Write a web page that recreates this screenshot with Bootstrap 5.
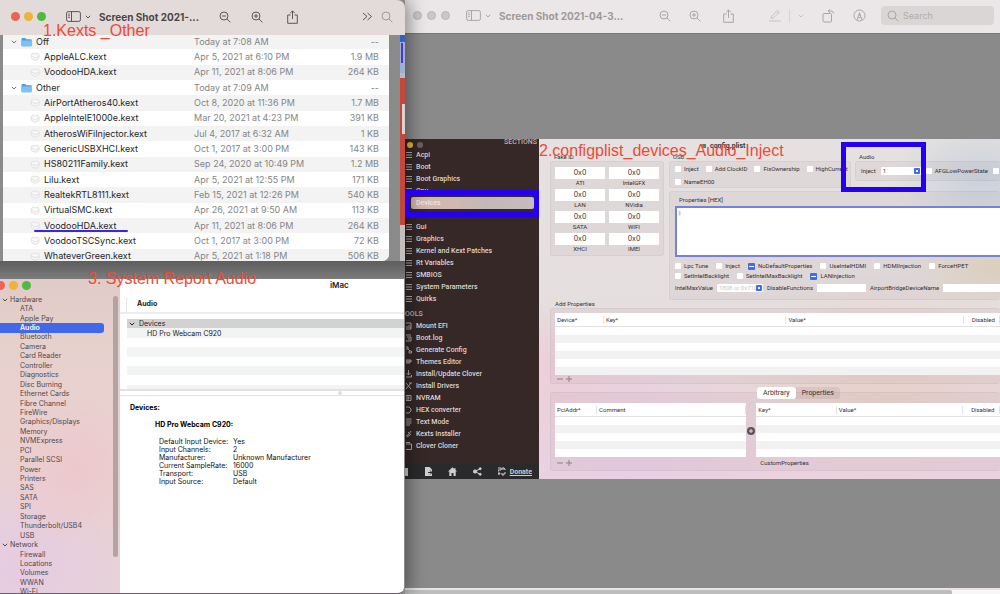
<!DOCTYPE html>
<html lang="en">
<head>
<meta charset="utf-8">
<meta name="viewport" content="width=device-width, initial-scale=1">
<title>Audio kext walkthrough</title>
<link href="https://cdn.jsdelivr.net/npm/bootstrap@5.3.0/dist/css/bootstrap.min.css" rel="stylesheet">
<style>
:root{--ui:Inter,"Liberation Sans",sans-serif;--rule:#e2e2e2}
body{font:400 7px/10px var(--ui);color:#222;background:#8a8a8a}
button,input,select,textarea{font:inherit;color:inherit;border:0;padding:0;background:none}
svg{display:block;fill:none;stroke:currentColor}
h1,h2,h3,fieldset,legend,table,dl,ul,label{margin:0;padding:0;font:inherit}
a{color:inherit;text-decoration:none}
.desktop{min-height:100vh;max-height:100vh}
.left-side{width:40.5%;z-index:2;background:#8a8a8a;box-shadow:4px 0 16px rgba(0,0,0,.4)}
.note{position:absolute;z-index:5;font:16px/18px "Liberation Sans",Arial,sans-serif;color:#ee4a33;white-space:nowrap;pointer-events:none}
.light{width:9px;height:9px;border-radius:50%;display:block}
.red{background:#ed6356}.amber{background:#eeb33a}.green{background:#4dbb3f}.off{background:#cbc7c7;border:1px solid #b9b5b5}

/* front viewer window */
.front-bar{height:35px;background:#e3dbda;border-top-right-radius:8px;color:#5c5757;padding:0 12px 2px 11px}
.front-bar h1,.back-bar h1{font-weight:700;font-size:10px;line-height:14px;white-space:nowrap}
.front-bar h1{color:#4b4645}
.finder-area{height:226px;padding-left:3px;background:#8b8b8b;border-bottom-right-radius:6px}
.finder{height:226px;overflow:hidden;background:#fff;border-bottom-right-radius:7px}
.finder table{width:100%;height:230px;margin-top:-1px;font-size:9px;line-height:12px;border-collapse:collapse;table-layout:fixed}
.finder tr:nth-child(odd){background:#f3f3f3}
.finder td{padding:0;white-space:nowrap;color:#858585}
.finder td:first-child{color:#262626}
.finder td:last-child{text-align:right;padding-right:10px}
.c-name{width:49.5%}.c-size{width:20%}
.file{padding-left:27px}.folder{padding-left:8px}
.file svg{color:#e0e0e0;fill:#f9f9f9}
.marked{position:relative}
.marked::after{content:"";position:absolute;left:-10px;right:-12px;bottom:0;height:2px;background:#3c24f0;border-radius:1px}
.gutter{width:11px;flex:none}
.photo-edge{width:5px;flex:none;background:linear-gradient(#2f62c4 0 7px,#9fb0d6 7px 38px,#b9b9c4 38px 43px,#c5473c 43px 190px,#c4bfbf 190px)}
.photo-edge::before{content:"";display:block;width:2px;height:20px;margin:8px 0 0 1px;background:#4636d6}
.photo-edge::after{content:"";display:block;width:3px;height:30px;margin:41px 0 0 2px;background:#d9d2d1}
.gap-shade{height:18px;background:linear-gradient(#5e5e5e,#7c7c7c)}

/* system report window */
.report{background:#fff;border-bottom-right-radius:6px;overflow:hidden;min-height:0;margin-right:1px;border-bottom:1px solid #6d5a6c}
.report-side{width:120px;flex:none;background:radial-gradient(circle at 75px 190px,#ecc8cc 0,transparent 80px),radial-gradient(circle at 20px 290px,#e6cbe2 0,transparent 110px),linear-gradient(#e0cbc8,#e6d0cc 60px,#ead2d1 55%,#e6d3d8);color:#514849}
.report-side ul{list-style:none;height:302px;width:104px}
.report-side li{flex:1;padding-left:20px;display:flex;align-items:center;white-space:nowrap;min-height:0}
.report-side li.group{padding-left:2px;gap:2px}
.report-side li.active{background:#4168ea;color:#fff;font-weight:600;border-radius:0 3px 3px 0}
.report-head{height:16px;padding-top:2px}
.scroll-track{width:5px;height:261px;background:#b3a3a2;border-radius:3px;margin:1px 2px 0 9px}
.imac{font-weight:600;font-size:8px;margin-left:210px;line-height:13px}
.bar-head{height:14px;margin:6px 0 0 6px;padding-left:10px;font-weight:700;border-left:1px solid var(--rule);line-height:12px}
.tree-top{height:2px;background:#ededed;margin-bottom:5px}
.tree{margin-left:7px;border-collapse:collapse;width:calc(100% - 7px);height:70px}
.tree td{height:9px;line-height:9px;padding:0 0 0 20px}
.tree tr:nth-child(even) td{background:#f2f3f3}
.tree tr:first-child td{background:#d2d2d2;padding-left:2px}
.tree tr:last-child td{height:4px;line-height:1px}
.splitter{height:7px;border:solid var(--rule);border-width:2px 0 1px}
.splitter::after{content:"";display:block;width:4px;height:4px;border-radius:50%;background:#ddd;margin-left:218px}
.facts{grid-template-columns:74px 1fr;margin:8px 0 0 39px;line-height:8px;color:#111}
.facts dt,.facts dd{font-weight:400;margin:0}

/* back viewer window */
.back-bar{height:34px;background:#ebe6e7;border-bottom:1px solid #777;color:#aaa5a6;padding:0 6px 2px 8px}
.back-bar h1{color:#9e999a;width:126px}
.back-lights{gap:5px}
.back-tools{padding:0 15px 0 34px}
.canvas-area{background:#8a8a8a;padding-top:105px;min-height:0}
.search{width:113px;height:19px;background:#dad6d6;border-radius:4px;padding:0 6px;color:#aaa6a6}
.search input{width:80px;font-size:9px;outline:0}
.search input::placeholder{color:#b0acac;opacity:1}
.h-scroll{height:6px;background:#f8f6f7;border-top:2px solid #e9e3e6}
.h-scroll div{height:4px;width:92%;background:#bdbdbd;border-radius:0 2px 0 0}

/* Clover configurator */
.clover{height:340px}
.clover-side{width:134px;flex:none;background:#352827;color:#dcd6d5;font-family:Roboto,"Liberation Sans",sans-serif;font-weight:500}
.clover-side .top{height:10px;padding:0 2px 0 2px;line-height:7px;color:#b9b0af}
.clover-side .light{width:6px;height:6px;margin-top:3px}
.clover-side ul{list-style:none}
.clover-side li{height:12px;line-height:12px;display:flex;align-items:center;gap:4px;padding-left:1px;white-space:nowrap}
.clover-side li svg{flex:none;width:6px;height:8px;color:#b3abaa}
.clover-side .chosen{background:linear-gradient(90deg,#cfb5ac,#d0b9b2 35%,#c3b8b9 60%,#c6bcbe);color:#efe7e5;margin:0 5px 0 6px;padding-left:5px;border-radius:2px;position:relative}
.chosen::after{content:"";position:absolute;inset:-7px -5px -8px -6px;border:5px solid #2500f0;z-index:3}
.tools-title{height:15px;padding-top:4px;color:#b9b0af}
.clover-foot{height:15px;background:#2a2a2c;color:#d0cdcd;padding:0 7px 0 0}
.clover-main{font:400 6px/8px Roboto,"Liberation Sans",sans-serif;color:#353132;padding:0 0 9px 11px;min-width:0;background:
 radial-gradient(ellipse at 96% 12%,#c9d2dc 0,transparent 90px),
 radial-gradient(ellipse at 100% 38%,#e2d6c2 0,transparent 90px),
 radial-gradient(ellipse at 3% 68%,#ecced9 0,transparent 130px),
 radial-gradient(ellipse at 75% 70%,#e6d2c9 0,transparent 150px),
 radial-gradient(ellipse at 20% 100%,#e8cfe4 0,transparent 150px),
 linear-gradient(#e6e1e1 0,#e5dfdf 45%,#e8d6da 75%,#ead2de)}
.plist-title{height:14px;line-height:12px;font-weight:700;font-size:7px;color:#3a3637;padding-left:152px}
.plist-title span{width:4px;height:4px;background:#4a8a5c}
.panel{background:rgba(120,90,95,.06);border:1px solid rgba(120,100,105,.08);border-radius:3px}
.fake{width:114px;flex:none}
.fake .panel{padding:5px 4px 1px;grid-template-columns:1fr 1fr;column-gap:4px;height:95px}
.fake label{text-align:center;line-height:8px;height:22px}
.fake input{display:block;width:100%;height:12px;background:#fff;text-align:center;font:400 7px/12px var(--ui)}
.right-part{margin-left:5px;min-width:0}
.tick{display:flex;align-items:center;gap:3px;white-space:nowrap;flex:none}
.tick input{appearance:none;width:6px;height:6px;background:#fff;border-radius:1px;margin:0;flex:none}
.tick input.mixed{width:7px;height:7px;background:#3b6ef0 linear-gradient(#fff,#fff) center/5px 1px no-repeat}
.usb{width:182px;flex:none}
.usb .panel{height:27px;padding:0 0 0 5px;overflow:hidden}
.line{display:flex;gap:7px;height:13px;align-items:center}
.audio{min-width:0}
.audio .panel{height:20px;padding:2px 0 0 5px;border-right:0}
.audio .line{gap:5px}
.audio .frame{position:absolute;left:-14px;top:-11px;width:85px;height:50px;border:5px solid #2500f0}
.drop{position:relative;background:#fff;border-radius:1px;display:flex;flex:none}
.drop select,.drop input{appearance:none;width:100%;padding-left:2px;height:8px;line-height:8px}
.drop::after{content:"";position:absolute;right:1px;top:1px;width:6px;height:6px;background:#3b6ef0 linear-gradient(#fff,#fff) center/2px 2px no-repeat;border-radius:1px;pointer-events:none}
.inj-box{width:40px}.max-box{width:46px}
.props{margin-top:3px;padding:4px 0 0 5px;height:109px;border-right:0}
.props textarea{display:block;width:100%;height:51px;background:#fff;border:2px solid #7482dd;border-right:0;resize:none;outline:0;overflow:hidden;margin:2px 0 4px;padding:1px 2px}
.props .tick-row{display:flex;height:10px;align-items:center;gap:8px}
.props .plain{background:#fff;height:8px}
.value-row{padding-top:3px}
.dis-box{width:49px}.bridge-box{width:20px}
.ghost::placeholder{color:#c9c9c9;opacity:1}
.grid-table{width:100%;border-collapse:separate;border-spacing:0;table-layout:fixed;background:#fff}
.grid-table th{font-weight:400;height:14px;padding:0 0 0 2px;border-bottom:1px solid var(--rule);background:linear-gradient(var(--rule),var(--rule)) right center/1px 8px no-repeat}
.grid-table td{height:8px;padding:0;line-height:1px}
.grid-table tr:nth-child(even) td{background:#f2f2f2}
.add-panel{padding:4px 0 0 4px;height:76px;border-right:0}
.arb-panel{margin-top:8px;padding:10px 0 0 4px;height:79px;border-right:0}
.below{margin-top:2px}
.pm button{width:9px;height:8px;display:flex;align-items:center;justify-content:center;color:#8b8084}
.tabs{position:absolute;left:206px;top:-6px;height:12px;background:rgba(130,90,95,.12);border-radius:3px}
.tabs button{height:12px;padding:0 6px;border-radius:3px;font-size:7px;line-height:12px}
.tabs .on{background:#fff}
</style>
</head>
<body>
<svg width="0" height="0" class="position-absolute" aria-hidden="true">
 <symbol id="i-side" viewBox="0 0 15 11"><rect x=".6" y=".6" width="13.8" height="9.8" rx="1.6"/><path d="M5.5.6v9.8M2.2 3h1.6M2.2 4.8h1.6M2.2 6.6h1.6"/></symbol>
 <symbol id="i-chev" viewBox="0 0 6 4"><path d="M.8.8 3 3 5.200.8"/></symbol>
 <symbol id="i-minus" viewBox="0 0 12 12"><circle cx="5" cy="5" r="4"/><path d="m8 8 3.400 3.400M3 5h4"/></symbol>
 <symbol id="i-plus" viewBox="0 0 12 12"><circle cx="5" cy="5" r="4"/><path d="m8 8 3.400 3.400M3 5h4M5 3v4"/></symbol>
 <symbol id="i-find" viewBox="0 0 12 12"><circle cx="5" cy="5" r="4"/><path d="m8 8 3.400 3.400"/></symbol>
 <symbol id="i-share" viewBox="0 0 11 14"><path d="M3.500 5H.7v8.300h9.600V5H7.500M5.500 9V1M3.200 3.200 5.500.9l2.300 2.300"/></symbol>
 <symbol id="i-kext" viewBox="0 0 10 9"><path d="M1 2.500 4 1l1.500 1L7 1l2 1.500v4L5.500 8.300 1.500 6.500zM2 4l3.300 2L9 4"/></symbol>
 <symbol id="i-dir" viewBox="0 0 11 10"><path d="M.5 2q0-1 1-1h2.800l1 1.200H10q.7 0 .7.800v5.500q0 .8-.8.8H1.300q-.8 0-.8-.8z" fill="#4a9fdc" stroke="none"/><path d="M.5 3.600h10.200v4.900q0 .8-.8.8H1.300q-.8 0-.8-.8z" fill="#7cc3f3" stroke="none"/></symbol>
 <symbol id="i-list" viewBox="0 0 6 8"><path d="M0 1.500h6M0 4h6M0 6.500h6"/></symbol>
</svg>
<div class="desktop d-flex position-relative overflow-hidden">

 <div class="left-side d-flex flex-column flex-shrink-0 position-relative">
  <section aria-label="Front viewer">
   <header class="front-bar d-flex align-items-center">
    <span class="light red"></span><span class="light amber mx-1"></span><span class="light green"></span>
    <button class="d-flex align-items-center gap-1 ms-3 ps-1" aria-label="Sidebar"><svg width="15" height="11"><use href="#i-side"/></svg><svg width="6" height="4"><use href="#i-chev"/></svg></button>
    <h1 class="ms-2">Screen Shot 2021-...</h1>
    <button class="ms-3 ps-1" aria-label="Zoom out"><svg width="12" height="12"><use href="#i-minus"/></svg></button>
    <button class="ms-3 ps-1" aria-label="Zoom in"><svg width="12" height="12"><use href="#i-plus"/></svg></button>
    <button class="ms-4 me-auto" aria-label="Share"><svg width="11" height="14"><use href="#i-share"/></svg></button>
    <button aria-label="More"><svg width="11" height="9"><path d="m1 1 4 3.500L1 8M5.500 1l4 3.500-4 3.500"/></svg></button>
    <button class="ms-2" aria-label="Find" style="color:#a09a99"><svg width="12" height="12"><use href="#i-find"/></svg></button>
   </header>
   <div class="d-flex">
    <div class="finder-area d-flex flex-grow-1">
     <div class="finder flex-grow-1"><table><colgroup><col class="c-name"><col><col class="c-size"></colgroup><tbody id="files"></tbody></table></div>
     <div class="gutter"></div>
    </div>
    <div class="photo-edge"></div>
   </div>
  </section>
  <div class="gap-shade flex-shrink-0"></div>
  <section class="report d-flex flex-grow-1" aria-label="System report">
   <nav class="report-side">
    <div class="report-head d-flex gap-1"><span class="light red" style="margin-left:-4px"></span><span class="light amber"></span><span class="light green"></span></div>
    <div class="d-flex"><ul class="d-flex flex-column" id="hw"></ul><div class="scroll-track"></div></div>
   </nav>
   <div class="flex-grow-1">
    <h2 class="imac">iMac</h2>
    <div class="bar-head">Audio</div>
    <div class="tree-top"></div>
    <table class="tree"><tbody>
     <tr><td><span class="d-flex align-items-center gap-1"><svg width="6" height="4"><use href="#i-chev"/></svg>Devices</span></td></tr>
     <tr><td>HD Pro Webcam C920</td></tr><tr><td></td></tr><tr><td></td></tr><tr><td></td></tr><tr><td></td></tr><tr><td></td></tr><tr><td></td></tr>
    </tbody></table>
    <div class="splitter"></div>
    <div class="fw-bold text-black" style="padding:7px 0 0 10px">Devices:</div>
    <div class="fw-bold text-black" style="padding:7px 0 0 35px">HD Pro Webcam C920:</div>
    <dl class="facts d-grid">
     <dt>Default Input Device:</dt><dd>Yes</dd><dt>Input Channels:</dt><dd>2</dd><dt>Manufacturer:</dt><dd>Unknown Manufacturer</dd>
     <dt>Current SampleRate:</dt><dd>16000</dd><dt>Transport:</dt><dd>USB</dd><dt>Input Source:</dt><dd>Default</dd>
    </dl>
   </div>
  </section>
  <div class="note" style="left:43px;top:22px">1.Kexts _Other</div>
  <div class="note" style="left:88px;top:270px">3. System Report Audio</div>
 </div>

 <main class="flex-grow-1 d-flex flex-column" style="min-width:0">
  <header class="back-bar d-flex align-items-center flex-shrink-0">
   <div class="back-lights d-flex"><span class="light off"></span><span class="light off"></span><span class="light off"></span></div>
   <button class="d-flex align-items-center gap-1 ms-3 me-2" aria-label="Sidebar"><svg width="15" height="11"><use href="#i-side"/></svg><svg width="6" height="4"><use href="#i-chev"/></svg></button>
   <h1>Screen Shot 2021-04-3...</h1>
   <div class="back-tools d-flex align-items-center justify-content-between flex-grow-1">
    <button aria-label="Zoom out"><svg width="12" height="12"><use href="#i-minus"/></svg></button>
    <button aria-label="Zoom in"><svg width="12" height="12"><use href="#i-plus"/></svg></button>
    <button class="ps-1" aria-label="Share"><svg width="11" height="14"><use href="#i-share"/></svg></button>
    <div class="d-flex align-items-center gap-2 ps-3" style="color:#c8c3c4">
     <button aria-label="Highlight"><svg width="12" height="13"><path d="M2 9.500 2.800 7 8.600 1.200 10.400 3 4.600 8.800zM7.400 2.500l1.800 1.800M0 12h12"/></svg></button>
     <span style="width:1px;height:14px;background:#d8d3d4"></span>
     <button aria-label="Highlight options"><svg width="6" height="4"><use href="#i-chev"/></svg></button>
    </div>
    <button aria-label="Rotate"><svg width="13" height="14"><rect x="1" y="4.500" width="8.500" height="8.500" rx="1"/><path d="M6 2h3q2.500 0 2.500 2.500M8 .3 6.200 2 8 3.700"/></svg></button>
    <button aria-label="Markup"><svg width="13" height="13"><circle cx="6.500" cy="6.500" r="5.500"/><path d="M4 11 6.500 4 9 11M5.200 8.500h2.600M6.500 3.500v3"/></svg></button>
   </div>
   <label class="search d-flex align-items-center gap-1"><svg width="12" height="12"><use href="#i-find"/></svg><input type="search" placeholder="Search" aria-label="Search"></label>
  </header>
  <div class="canvas-area flex-grow-1">
   <div class="clover d-flex position-relative">
    <nav class="clover-side d-flex flex-column">
     <div class="top d-flex gap-1"><span class="light amber"></span><span class="light" style="background:#6b6160"></span><span class="ms-auto">SECTIONS</span></div>
     <ul id="sections"></ul>
     <div class="tools-title">OOLS</div>
     <ul id="tools"></ul>
     <footer class="clover-foot d-flex align-items-center justify-content-between mt-auto">
      <svg width="4" height="8"><path d="M0 0h3v8H0z" fill="currentColor" stroke="none"/></svg>
      <svg width="8" height="9"><path d="M0 0h4.500L7 2.500V9H0z" fill="currentColor" stroke="none"/><path d="M3 5.500h4M5 3.500l2 2-2 2" stroke="#2a2a2c"/></svg>
      <svg width="9" height="9"><path d="M4.500.3 0 4.500h1.300V9h2.200V6h2v3h2.200V4.500H9L7.500 3V1H6.300v1z" fill="currentColor" stroke="none"/></svg>
      <svg width="9" height="9"><circle cx="2" cy="4.500" r="1.600" fill="currentColor"/><circle cx="7.200" cy="1.700" r="1" fill="currentColor"/><circle cx="7.200" cy="7.300" r="1" fill="currentColor"/><path d="M7.200 1.700 2 4.500l5.200 2.800"/></svg>
      <a href="#donate" class="d-flex align-items-center gap-1"><svg width="8" height="9"><path d="M0 1h3v2H0v2M4 3V1h2v2M6 1l1.500 2M0 8V6h2v1H0M4 8h2V6h2M4 6v2"/></svg><span class="text-decoration-underline fw-bold">Donate</span></a>
     </footer>
    </nav>
    <div class="clover-main flex-grow-1">
     <div class="plist-title d-flex align-items-center gap-1"><span></span>config.plist</div>
     <div class="d-flex">
      <div class="fake"><div class="ps-1">Fake ID</div><div class="panel d-grid" id="fake"></div></div>
      <div class="right-part flex-grow-1">
       <div class="d-flex gap-1">
        <div class="usb"><div class="ps-1">USB</div><div class="panel">
         <div class="line"><label class="tick"><input type="checkbox">Inject</label><label class="tick"><input type="checkbox">Add ClockID</label><label class="tick"><input type="checkbox">FixOwnership</label><label class="tick"><input type="checkbox">HighCurrent</label></div>
         <div class="line"><label class="tick"><input type="checkbox">NameEH00</label></div></div></div>
        <div class="audio position-relative flex-grow-1"><div class="ps-1">Audio</div><div class="panel">
         <div class="line"><label for="inj">Inject</label><span class="drop inj-box"><select id="inj"><option>1</option></select></span><label class="tick"><input type="checkbox">AFGLowPowerState</label><label class="tick"><input type="checkbox" aria-label="More"></label></div></div>
         <div class="frame"></div></div>
       </div>
       <div class="panel props">
        <label for="hex" class="d-block ps-1">Properties [HEX]</label>
        <textarea id="hex">|</textarea>
        <div class="tick-row"><label class="tick"><input type="checkbox">Lpc Tune</label><label class="tick"><input type="checkbox">Inject</label><label class="tick"><input type="checkbox" class="mixed">NoDefaultProperties</label><label class="tick"><input type="checkbox">UseIntelHDMI</label><label class="tick"><input type="checkbox">HDMIInjection</label><label class="tick"><input type="checkbox">ForceHPET</label></div>
        <div class="tick-row"><label class="tick"><input type="checkbox">SetIntelBacklight</label><label class="tick"><input type="checkbox">SetIntelMaxBacklight</label><label class="tick"><input type="checkbox" class="mixed">LANInjection</label></div>
        <div class="value-row d-flex align-items-center gap-1"><label for="imv">IntelMaxValue</label><span class="drop max-box"><input class="ghost" id="imv" placeholder="1808 or 0x710"></span><label for="dis">DisableFunctions</label><input class="plain dis-box flex-shrink-0" id="dis"><label for="abd">AirportBridgeDeviceName</label><input class="plain bridge-box flex-grow-1" id="abd"></div>
       </div>
      </div>
     </div>
     <div style="padding-left:5px">Add Properties</div>
     <div class="panel add-panel">
      <table class="grid-table"><colgroup><col style="width:11%"><col><col style="width:40%"><col style="width:8%"></colgroup><thead><tr><th>Device*</th><th>Key*</th><th>Value*</th><th class="text-center">Disabled</th></tr></thead>
      <tbody><tr><td></td><td></td><td></td><td></td></tr><tr><td></td><td></td><td></td><td></td></tr><tr><td></td><td></td><td></td><td></td></tr><tr><td></td><td></td><td></td><td></td></tr><tr><td></td><td></td><td></td><td></td></tr><tr><td></td><td></td><td></td><td></td></tr></tbody></table>
      <div class="pm d-flex"><button aria-label="Remove"><svg width="6" height="6"><path d="M0 3h6"/></svg></button><button aria-label="Add"><svg width="6" height="6"><path d="M0 3h6M3 0v6"/></svg></button></div>
     </div>
     <div class="panel arb-panel position-relative d-flex">
      <div class="tabs d-flex"><button class="on">Arbitrary</button><button>Properties</button></div>
      <div style="width:43%;flex:none"><table class="grid-table"><colgroup><col style="width:22%"><col></colgroup><thead><tr><th>PciAddr*</th><th>Comment</th></tr></thead>
       <tbody><tr><td></td><td></td></tr><tr><td></td><td></td></tr><tr><td></td><td></td></tr><tr><td></td><td></td></tr><tr><td></td><td></td></tr></tbody></table>
       <div class="pm d-flex below"><button aria-label="Remove"><svg width="6" height="6"><path d="M0 3h6"/></svg></button><button aria-label="Add"><svg width="6" height="6"><path d="M0 3h6M3 0v6"/></svg></button></div></div>
      <button class="flex-shrink-0 align-self-start" style="width:10px;padding:24px 1px 0" aria-label="Move"><svg width="8" height="8"><circle cx="4" cy="4" r="4" fill="#5d5457" stroke="none"/><path d="M2 4h4M4 2v4" stroke="#e8dde0"/></svg></button>
      <div class="flex-grow-1"><table class="grid-table"><colgroup><col style="width:33%"><col><col style="width:15%"></colgroup><thead><tr><th>Key*</th><th>Value*</th><th class="text-center">Disabled</th></tr></thead>
       <tbody><tr><td></td><td></td><td></td></tr><tr><td></td><td></td><td></td></tr><tr><td></td><td></td><td></td></tr><tr><td></td><td></td><td></td></tr><tr><td></td><td></td><td></td></tr></tbody></table>
       <div class="below ps-1">CustomProperties</div></div>
     </div>
    </div>
    <div class="note" style="left:134px;top:3px">2.configplist_devices_Audio_Inject</div>
   </div>
  </div>
  <div class="h-scroll flex-shrink-0"><div></div></div>
 </main>
</div>
<script src="https://cdn.jsdelivr.net/npm/bootstrap@5.3.0/dist/js/bootstrap.bundle.min.js"></script>
<script>
const files=[["Off","Today at 7:08 AM","--",1],["AppleALC.kext","Apr 5, 2021 at 6:10 PM","1.9 MB"],["VoodooHDA.kext","Apr 11, 2021 at 8:06 PM","264 KB"],["Other","Today at 7:09 AM","--",1],["AirPortAtheros40.kext","Oct 8, 2020 at 11:36 PM","1.7 MB"],["AppleIntelE1000e.kext","Mar 20, 2021 at 4:23 PM","391 KB"],["AtherosWiFiInjector.kext","Jul 4, 2017 at 6:32 AM","1 KB"],["GenericUSBXHCI.kext","Oct 1, 2017 at 3:00 PM","143 KB"],["HS80211Family.kext","Sep 24, 2020 at 10:49 PM","1.2 MB"],["Lilu.kext","Apr 5, 2021 at 12:55 PM","171 KB"],["RealtekRTL8111.kext","Feb 15, 2021 at 12:26 PM","540 KB"],["VirtualSMC.kext","Apr 26, 2021 at 9:50 AM","113 KB"],["VoodooHDA.kext","Apr 11, 2021 at 8:06 PM","264 KB"],["VoodooTSCSync.kext","Oct 1, 2017 at 3:00 PM","72 KB"],["WhateverGreen.kext","Apr 5, 2021 at 1:18 PM","506 KB"]];
document.getElementById('files').innerHTML=files.map(([n,d,s,f],i)=>`<tr><td><span class="d-flex align-items-center gap-1 ${f?'folder':'file'}">${f?'<svg width="6" height="4" style="color:#777"><use href="#i-chev"/></svg><svg width="11" height="10"><use href="#i-dir"/></svg>':'<svg width="10" height="9"><use href="#i-kext"/></svg>'}<span class="${i==12?'marked':''}">${n}</span></span></td><td>${d}</td><td>${s}</td></tr>`).join('');
const hw=["*Hardware","ATA","Apple Pay","Audio","Bluetooth","Camera","Card Reader","Controller","Diagnostics","Disc Burning","Ethernet Cards","Fibre Channel","FireWire","Graphics/Displays","Memory","NVMExpress","PCI","Parallel SCSI","Power","Printers","SAS","SATA","SPI","Storage","Thunderbolt/USB4","USB","*Network","Firewall","Locations","Volumes","WWAN","Wi-Fi"];
document.getElementById('hw').innerHTML=hw.map(t=>t[0]=='*'?`<li class="group"><svg width="6" height="4"><use href="#i-chev"/></svg>${t.slice(1)}</li>`:`<li class="${t=='Audio'?'active':''}">${t}</li>`).join('');
const bars='<svg><use href="#i-list"/></svg>';
document.getElementById('sections').innerHTML=["Acpi","Boot","Boot Graphics","Cpu","Devices","","Gui","Graphics","Kernel and Kext Patches","Rt Variables","SMBIOS","System Parameters","Quirks"].map(t=>t=='Devices'?`<li class="chosen">${t}</li>`:t?`<li>${bars}${t}</li>`:'<li></li>').join('');
const tools=[["Mount EFI","M0 1h5v6H0M0 5h5M3 3v1"],["Boot.log","M0 1h5M1 3h4v4H0M2 5h2"],["Generate Config","M0 1h2v2H0M3 5h2.500v2H3zM2 3l2 2"],["Themes Editor","M0 2h5v2H0zM0 5h4M1 3h4"],["Install/Update Clover","M2.500 0v5M.5 3l2 2 2-2M0 7h5.500V5"],["Install Drivers","M0 7l5-6M0 1l5 6M3 1h3"],["NVRAM","M0 1.500h5v5H0M0 3h3v2H0"],["HEX converter","M0 1h3l2 2v2L3 7H0"],["Text Mode","M0 1h5.500M0 3h5.500M0 5h5.500M0 7h4"],["Kexts Installer","M0 6l3-2 2-3M1 7l3-2M2 2l3 3"],["Clover Cloner","M0 2h5.500v5.500H0M0 .5h4"]];
document.getElementById('tools').innerHTML=tools.map(([t,p])=>`<li><svg viewBox="0 0 6 8"><path d="${p}"/></svg>${t}</li>`).join('');
document.getElementById('fake').innerHTML=["ATI","IntelGFX","LAN","NVidia","SATA","WIFI","XHCI","IMEI"].map(t=>`<label><input value="0x0">${t}</label>`).join('');
</script>
</body>
</html>
